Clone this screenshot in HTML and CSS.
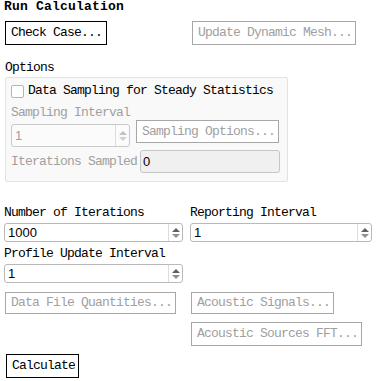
FILE: index.html
```html
<!DOCTYPE html>
<html lang="en">
<head>
  <meta charset="UTF-8"/>
  <title>Run Calculation</title>
  <link rel="stylesheet" href="styles.css">
</head>
<body>

  <!-- Header -->
  <div class="title">Run Calculation</div>

  <div class="top-row">
    <button class="btn check-btn">Check Case...</button>
    <button class="btn btn-off mesh-btn" disabled>Update Dynamic Mesh...</button>
  </div>

  <!-- Options -->
  <div class="label options-label">Options</div>
  <div class="group">
    <label class="check-row"><span class="checkbox"></span>Data Sampling for Steady Statistics</label>
    <div class="label label-off">Sampling Interval</div>
    <div class="sample-row">
      <div class="spin spin-off spin-small"><span class="spin-val">1</span><span class="arrows"><i class="up"></i><i class="down"></i></span></div>
      <button class="btn btn-off samp-btn" disabled>Sampling Options...</button>
    </div>
    <div class="sampled-row">
      <span class="label-off">Iterations Sampled</span>
      <div class="field-off">0</div>
    </div>
  </div>

  <!-- Iterations -->
  <div class="iter-grid">
    <div class="field-col">
      <div class="label">Number of Iterations</div>
      <div class="spin"><span class="spin-val">1000</span><span class="arrows"><i class="up"></i><i class="down"></i></span></div>
    </div>
    <div class="field-col">
      <div class="label">Reporting Interval</div>
      <div class="spin"><span class="spin-val">1</span><span class="arrows"><i class="up"></i><i class="down"></i></span></div>
    </div>
    <div class="field-col">
      <div class="label">Profile Update Interval</div>
      <div class="spin"><span class="spin-val">1</span><span class="arrows"><i class="up"></i><i class="down"></i></span></div>
    </div>
  </div>

  <div class="btn-grid">
    <button class="btn btn-off dfq-btn" disabled>Data File Quantities...</button>
    <button class="btn btn-off sig-btn" disabled>Acoustic Signals...</button>
    <span></span>
    <button class="btn btn-off fft-btn" disabled>Acoustic Sources FFT...</button>
  </div>

  <button class="btn calc-btn">Calculate</button>

</body>
</html>
```

FILE: styles.css
```css
body {
  margin: 0;
  font-family: "Liberation Mono", "DejaVu Sans Mono", monospace;
  font-size: 13px;
  letter-spacing: -0.8px;
  color: #000;
  background: #fff;
  width: 379px;
  height: 381px;
  overflow: hidden;
}

.title {
  font-weight: bold;
  line-height: 14px;
  padding: 0 0 0 4px;
  letter-spacing: 0.2px;
}

.btn {
  font-family: inherit;
  font-size: 13px;
  letter-spacing: -0.8px;
  white-space: nowrap;
  background: #fff;
  color: #000;
  border: 1px solid #000;
  border-radius: 0;
  padding: 0 5px;
  margin: 0;
  height: 24px;
  line-height: 14px;
  text-align: left;
  box-sizing: border-box;
  display: block;
}

.btn-off {
  color: #a0a0a0;
  border-color: #a7a7a7;
}

.top-row {
  display: flex;
  margin-top: 7px;
  padding-left: 5px;
}

.check-btn { width: 102px; }

.mesh-btn {
  width: 164px;
  margin-left: 85px;
}

.label {
  line-height: 14px;
  white-space: nowrap;
}

.label-off {
  color: #a0a0a0;
  white-space: nowrap;
}

.options-label {
  margin: 16px 0 0 5px;
}

.group {
  margin: 2px 0 0 5px;
  width: 283px;
  height: 105px;
  box-sizing: border-box;
  background: #f9f9f9;
  border: 1px solid #e2e2e2;
  border-radius: 2px;
  padding: 6px 0 0 5px;
}

.check-row {
  display: flex;
  align-items: center;
  gap: 4px;
  height: 14px;
  line-height: 14px;
}

.checkbox {
  width: 13px;
  height: 13px;
  box-sizing: border-box;
  background: #fff;
  border: 1px solid #b5b5b5;
  border-radius: 2px;
}

.group .label-off {
  margin-top: 8px;
  line-height: 14px;
}

.sample-row {
  display: flex;
  align-items: flex-start;
  gap: 6px;
}

.sample-row .spin-small {
  margin-top: 4px;
}

.samp-btn {
  width: 143px;
  height: 23px;
}

.sampled-row {
  display: flex;
  align-items: center;
  gap: 3px;
  margin-top: 3px;
}

.sampled-row .label-off {
  margin: 0;
}

.field-off {
  width: 140px;
  height: 23px;
  box-sizing: border-box;
  border: 1px solid #c6c6c6;
  border-radius: 3px;
  background: #f0f0f0;
  font-family: "Liberation Sans", Arial, sans-serif;
  letter-spacing: 0;
  line-height: 21px;
  padding-left: 2px;
}

/* spin inputs */
.spin {
  display: flex;
  height: 19px;
  box-sizing: border-box;
  border: 1px solid #b9b9b9;
  border-radius: 3px;
  background: #fff;
  font-family: "Liberation Sans", Arial, sans-serif;
  letter-spacing: 0;
}

.spin-val {
  flex: 1;
  line-height: 17px;
  padding-left: 3px;
}

.arrows {
  width: 13px;
  border-left: 1px solid #dcdcdc;
  display: flex;
  flex-direction: column;
  justify-content: center;
  align-items: center;
  gap: 2px;
}

.arrows i {
  width: 0;
  height: 0;
  border-left: 4px solid transparent;
  border-right: 4px solid transparent;
}

.arrows .up { border-bottom: 4px solid #606060; }
.arrows .down { border-top: 4px solid #909090; }

.spin-off {
  border-color: #c9c9c9;
  background: #fbfbfb;
  color: #a0a0a0;
}

.spin-off .arrows .up { border-bottom-color: #c0c0c0; }
.spin-off .arrows .down { border-top-color: #d0d0d0; }

.spin-small {
  width: 119px;
  height: 23px;
}

.spin-small .spin-val {
  line-height: 21px;
}

.iter-grid {
  display: grid;
  grid-template-columns: 179px 182px;
  column-gap: 7px;
  row-gap: 5px;
  margin: 24px 0 0 4px;
}

.field-col .label {
  margin-bottom: 3px;
}

.btn-grid {
  display: grid;
  grid-template-columns: 186px 180px;
  row-gap: 8px;
  margin: 9px 0 0 5px;
  justify-items: start;
}

.dfq-btn { width: 171px; height: 22px; }
.sig-btn { width: 143px; height: 22px; }
.fft-btn { width: 171px; }

.calc-btn {
  margin: 8px 0 0 6px;
  width: 73px;
}
```
